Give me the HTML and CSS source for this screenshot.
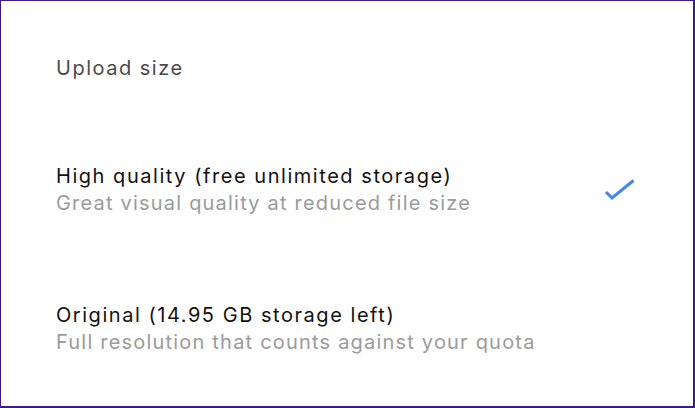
FILE: index.html
```html
<!DOCTYPE html>
<html>
<head>
<meta charset="utf-8">
<link rel="stylesheet" href="styles.css">
</head>
<body>
<div class="frame">
  <div class="header">Upload size</div>
  <div class="option">
    <div class="texts">
      <div class="title">High quality (free unlimited storage)</div>
      <div class="sub">Great visual quality at reduced file size</div>
    </div>
    <svg class="check" width="32" height="24" viewBox="0 0 32 24"><polyline points="2,14 8,20 29.5,2.5" fill="none" stroke="#4285f4" stroke-width="3"/></svg>
  </div>
  <div class="option">
    <div class="texts">
      <div class="title">Original (14.95 GB storage left)</div>
      <div class="sub">Full resolution that counts against your quota</div>
    </div>
  </div>
</div>
</body>
</html>
```
FILE: styles.css
```css
html, body { margin: 0; padding: 0; background: #fff; }
.frame {
  box-sizing: border-box;
  width: 695px;
  height: 408px;
  border: 2px solid #3b1a8c;
  border-top-width: 1px;
  border-left-width: 1px;
  font-family: Inter, "Noto Sans", sans-serif;
  font-size: 20px;
  letter-spacing: 1.35px;
  line-height: 27px;
  padding-left: 55px;
}
.header {
  color: #4a4a4a;
  margin-top: 54px;
  letter-spacing: 1.5px;
}
.option {
  display: flex;
  align-items: center;
  justify-content: space-between;
  padding-right: 57px;
}
.option:nth-of-type(2) { margin-top: 81px; }
.option:nth-of-type(3) { margin-top: 85px; }
.title { color: #111; letter-spacing: 1.54px; }
.sub { color: #9b9b9b; letter-spacing: 1.2px; }
.check { display: block; }
```
